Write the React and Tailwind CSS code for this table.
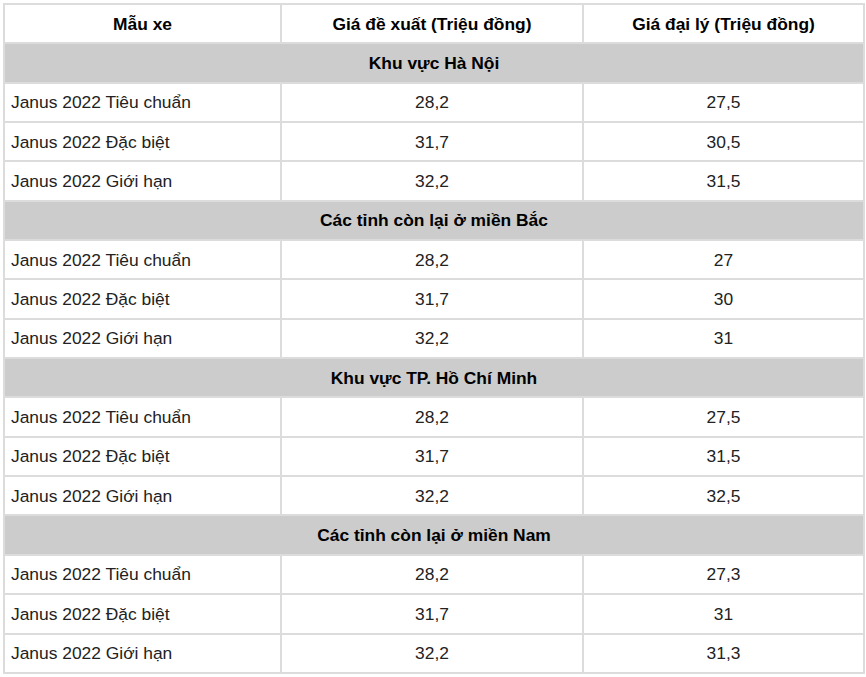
import { Fragment } from "react";

const sections = [
  {
    title: "Khu vực Hà Nội",
    rows: [
      ["Janus 2022 Tiêu chuẩn", "28,2", "27,5"],
      ["Janus 2022 Đặc biệt", "31,7", "30,5"],
      ["Janus 2022 Giới hạn", "32,2", "31,5"],
    ],
  },
  {
    title: "Các tỉnh còn lại ở miền Bắc",
    rows: [
      ["Janus 2022 Tiêu chuẩn", "28,2", "27"],
      ["Janus 2022 Đặc biệt", "31,7", "30"],
      ["Janus 2022 Giới hạn", "32,2", "31"],
    ],
  },
  {
    title: "Khu vực TP. Hồ Chí Minh",
    rows: [
      ["Janus 2022 Tiêu chuẩn", "28,2", "27,5"],
      ["Janus 2022 Đặc biệt", "31,7", "31,5"],
      ["Janus 2022 Giới hạn", "32,2", "32,5"],
    ],
  },
  {
    title: "Các tỉnh còn lại ở miền Nam",
    rows: [
      ["Janus 2022 Tiêu chuẩn", "28,2", "27,3"],
      ["Janus 2022 Đặc biệt", "31,7", "31"],
      ["Janus 2022 Giới hạn", "32,2", "31,3"],
    ],
  },
];

export default function App() {
  const cell = "border-2 border-[#dcdcdc] h-[39.35px] p-0";
  return (
    <div className="min-h-screen bg-white pt-[3px] pl-[3px] font-['Liberation_Sans',Arial,sans-serif] text-[17.4px] text-[#222]">
      <table className="w-[860px] border-collapse table-fixed">
        <colgroup>
          <col className="w-[277px]" />
          <col className="w-[302px]" />
          <col className="w-[281px]" />
        </colgroup>
        <thead>
          <tr>
            <th className={`${cell} text-center font-bold text-black`}>Mẫu xe</th>
            <th className={`${cell} text-center font-bold text-black`}>
              Giá đề xuất (Triệu đồng)
            </th>
            <th className={`${cell} text-center font-bold text-black`}>
              Giá đại lý (Triệu đồng)
            </th>
          </tr>
        </thead>
        <tbody>
          {sections.map((s) => (
            <Fragment key={s.title}>
              <tr className="bg-[#cccccc]">
                <td colSpan={3} className={`${cell} text-center font-bold text-black`}>
                  {s.title}
                </td>
              </tr>
              {s.rows.map((r, i) => (
                <tr key={i}>
                  <td className={`${cell} pl-[6px]`}>{r[0]}</td>
                  <td className={`${cell} text-center`}>{r[1]}</td>
                  <td className={`${cell} text-center`}>{r[2]}</td>
                </tr>
              ))}
            </Fragment>
          ))}
        </tbody>
      </table>
    </div>
  );
}
